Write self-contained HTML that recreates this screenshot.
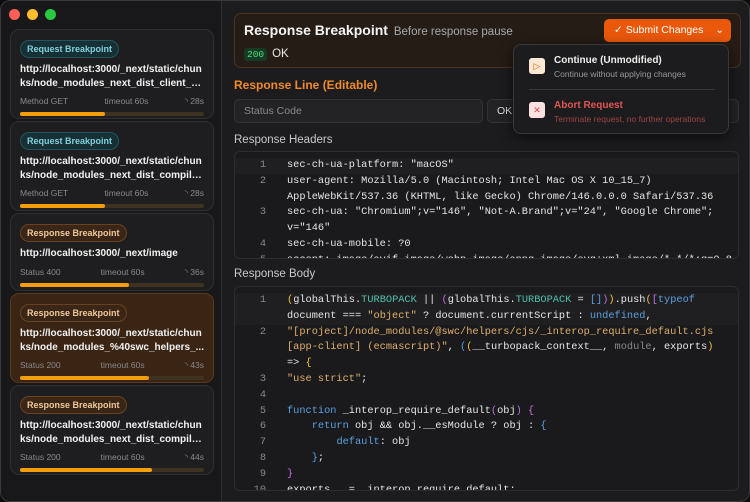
<!DOCTYPE html>
<html><head><meta charset="utf-8"><style>
*{box-sizing:border-box;margin:0;padding:0}
body{width:750px;height:502px;background:#0c0c0d;font-family:"Liberation Sans",sans-serif;overflow:hidden;position:relative}
.win{position:absolute;left:0;top:0;width:750px;height:502px;background:#1c1c1e;border-radius:10px;border:1px solid #3a3a3c;overflow:hidden}
.side{position:absolute;left:0;top:0;width:221px;height:502px;background:#18181a;border-right:1px solid #2e2e30}
.dot{position:absolute;top:8px;width:11px;height:11px;border-radius:50%}
.card{position:absolute;left:9px;width:204px;border:1px solid #2f2f31;border-radius:9px;background:#1e1e20;padding:9px 9px}
.card.sel{background:#3a2414;border-color:#5a3a1e}
.badge{display:inline-block;font-size:9px;font-weight:bold;padding:3px 6px;border-radius:9px}
.req{background:#163036;color:#7fd0dc;border:1px solid #24545c}
.res{background:#3a2616;color:#f0c89a;border:1px solid #6a4220}
.url{color:#f2f2f2;font-size:10px;font-weight:bold;line-height:13.5px;margin-top:5px;word-break:break-all;display:-webkit-box;-webkit-line-clamp:2;-webkit-box-orient:vertical;overflow:hidden}
.meta{display:flex;justify-content:space-between;color:#8a8a8e;font-size:8.5px;margin-top:6px}
.bar{height:4px;background:#3e3220;border-radius:2px;margin-top:5px}
.bar i{display:block;height:4px;background:#f59e0b;border-radius:2px}
.main{position:absolute;left:221px;top:0;right:0;bottom:0}
.lbl{position:absolute;left:12px;font-size:11.5px;color:#c8c8cc}
.code{position:absolute;left:12px;width:505px;background:#1a1a1c;border:1px solid #2c2c2e;border-radius:6px;overflow:hidden;font-family:"Liberation Mono",monospace;font-size:10.3px;color:#e6e6e6}
.ln{display:flex;line-height:15.8px}
.ln b{font-weight:normal;width:52px;text-align:right;padding-right:21px;color:#8a8a8e;flex:none}
.ln span.t{flex:1;white-space:pre}
.s{color:#e0b06a}.k{color:#5aa0e0}.c{color:#4fc0b0}.p{color:#c070e0}.y{color:#f0c040}.g{color:#888}
</style></head><body>
<div class="win">
<div class="side">
<div class="dot" style="left:8px;background:#fe5f57"></div>
<div class="dot" style="left:26px;background:#febc2e"></div>
<div class="dot" style="left:44px;background:#28c840"></div>
<div class="card" style="top:28px;height:90px"><span class="badge req">Request Breakpoint</span><div class="url">http://localhost:3000/_next/static/chunks/node_modules_next_dist_client_17...</div><div class="meta"><span>Method GET</span><span>timeout 60s</span><span>◝ 28s</span></div><div class="bar"><i style="width:46%"></i></div></div>
<div class="card" style="top:120px;height:90px"><span class="badge req">Request Breakpoint</span><div class="url">http://localhost:3000/_next/static/chunks/node_modules_next_dist_compile...</div><div class="meta"><span>Method GET</span><span>timeout 60s</span><span>◝ 28s</span></div><div class="bar"><i style="width:46%"></i></div></div>
<div class="card" style="top:212px;height:78px"><span class="badge res">Response Breakpoint</span><div class="url">http://localhost:3000/_next/image</div><div class="meta"><span>Status 400</span><span>timeout 60s</span><span>◝ 36s</span></div><div class="bar"><i style="width:59%"></i></div></div>
<div class="card sel" style="top:292px;height:90px"><span class="badge res">Response Breakpoint</span><div class="url">http://localhost:3000/_next/static/chunks/node_modules_%40swc_helpers_...</div><div class="meta"><span>Status 200</span><span>timeout 60s</span><span>◝ 43s</span></div><div class="bar"><i style="width:70%"></i></div></div>
<div class="card" style="top:384px;height:90px"><span class="badge res">Response Breakpoint</span><div class="url">http://localhost:3000/_next/static/chunks/node_modules_next_dist_compile...</div><div class="meta"><span>Status 200</span><span>timeout 60s</span><span>◝ 44s</span></div><div class="bar"><i style="width:72%"></i></div></div>
</div>
<div class="main">
<div style="position:absolute;left:12px;top:12px;width:507px;height:55px;background:#261c16;border:1px solid #4a3220;border-radius:7px">
<div style="position:absolute;left:9px;top:8px;font-size:14px;font-weight:bold;color:#f4f4f4">Response Breakpoint <span style="font-size:11.5px;font-weight:normal;color:#a8a8ac;margin-left:2px">Before response pause</span></div>
<div style="position:absolute;left:9px;top:34px;font-size:11.5px;color:#e8e8e8"><span style="background:#173a24;color:#4ade80;font-family:'Liberation Mono',monospace;font-size:9.5px;padding:1px 3px;border-radius:3px;margin-right:5px">200</span>OK</div>
<div style="position:absolute;left:369px;top:5px;width:127px;height:23px;background:#ea580c;border-radius:5px;color:#fff;font-size:10.5px;line-height:23px;padding-left:10px">✓ Submit Changes<span style="position:absolute;right:7px;top:0">⌄</span></div>
</div>
<div class="lbl" style="top:77px;color:#f08a2a;font-weight:bold;font-size:12px">Response Line (Editable)</div>
<div style="position:absolute;left:12px;top:98px;width:249px;height:24px;background:#232325;border:1px solid #333;border-radius:5px;font-size:10.5px;color:#8a8a8e;padding:5px 9px">Status Code</div>
<div style="position:absolute;left:265px;top:98px;width:252px;height:24px;background:#232325;border:1px solid #333;border-radius:5px;font-size:10.5px;color:#ddd;padding:5px 9px">OK</div>
<div class="lbl" style="top:133px">Response Headers</div>
<div class="code" style="top:150px;height:108px;padding-top:6px">
<div class="ln" style="background:#1f1f21"><b>1</b><span class="t">sec-ch-ua-platform: "macOS"</span></div>
<div class="ln"><b>2</b><span class="t">user-agent: Mozilla/5.0 (Macintosh; Intel Mac OS X 10_15_7)
AppleWebKit/537.36 (KHTML, like Gecko) Chrome/146.0.0.0 Safari/537.36</span></div>
<div class="ln"><b>3</b><span class="t">sec-ch-ua: "Chromium";v="146", "Not-A.Brand";v="24", "Google Chrome";
v="146"</span></div>
<div class="ln"><b>4</b><span class="t">sec-ch-ua-mobile: ?0</span></div>
<div class="ln"><b>5</b><span class="t">accept: image/avif,image/webp,image/apng,image/svg+xml,image/*,*/*;q=0.8</span></div>
</div>
<div class="lbl" style="top:267px">Response Body</div>
<div class="code" style="top:285px;height:205px;padding-top:6px">
<div class="ln" style="background:#1f1f21"><b>1</b><span class="t"><span class="y">(</span>globalThis.<span class="c">TURBOPACK</span> || <span class="p">(</span>globalThis.<span class="c">TURBOPACK</span> = <span class="k">[]</span><span class="p">)</span><span class="y">)</span>.push<span class="y">(</span><span class="p">[</span><span class="k">typeof</span>
document === <span class="s">"object"</span> ? document.currentScript : <span class="k">undefined</span>,</span></div>
<div class="ln"><b>2</b><span class="t"><span class="s">"[project]/node_modules/@swc/helpers/cjs/_interop_require_default.cjs
[app-client] (ecmascript)"</span>, <span class="k">(</span><span class="y">(</span>__turbopack_context__, <span class="g">module</span>, exports<span class="y">)</span>
=&gt; <span class="y">{</span></span></div>
<div class="ln"><b>3</b><span class="t"><span class="s">"use strict"</span>;</span></div>
<div class="ln"><b>4</b><span class="t"> </span></div>
<div class="ln"><b>5</b><span class="t"><span class="k">function</span> _interop_require_default<span class="p">(</span>obj<span class="p">)</span> <span class="p">{</span></span></div>
<div class="ln"><b>6</b><span class="t">    <span class="k">return</span> obj &amp;&amp; obj.__esModule ? obj : <span class="k">{</span></span></div>
<div class="ln"><b>7</b><span class="t">        <span class="k">default</span>: obj</span></div>
<div class="ln"><b>8</b><span class="t">    <span class="k">}</span>;</span></div>
<div class="ln"><b>9</b><span class="t"><span class="p">}</span></span></div>
<div class="ln"><b>10</b><span class="t">exports._ = _interop_require_default;</span></div>
</div>
<div style="position:absolute;left:291px;top:43px;width:216px;height:90px;background:#1c1c1e;border:1px solid #38383a;border-radius:8px;box-shadow:0 4px 14px rgba(0,0,0,.6)">
<div style="position:absolute;left:15px;top:13px;width:16px;height:16px;background:#fde8d4;border-radius:3px;color:#ea580c;font-size:9px;text-align:center;line-height:16px">▷</div>
<div style="position:absolute;left:40px;top:10px;font-size:10px;font-weight:bold;color:#eee">Continue (Unmodified)</div>
<div style="position:absolute;left:40px;top:24px;font-size:8.5px;color:#9a9a9e">Continue without applying changes</div>
<div style="position:absolute;left:15px;top:44px;width:186px;height:1px;background:#38383a"></div>
<div style="position:absolute;left:15px;top:57px;width:16px;height:16px;background:#fde0e0;border-radius:3px;color:#e04848;font-size:9px;text-align:center;line-height:16px">✕</div>
<div style="position:absolute;left:40px;top:55px;font-size:10px;font-weight:bold;color:#e05555">Abort Request</div>
<div style="position:absolute;left:40px;top:69px;font-size:8.5px;color:#a04444">Terminate request, no further operations</div>
</div>
</div>
</div>
</body></html>
